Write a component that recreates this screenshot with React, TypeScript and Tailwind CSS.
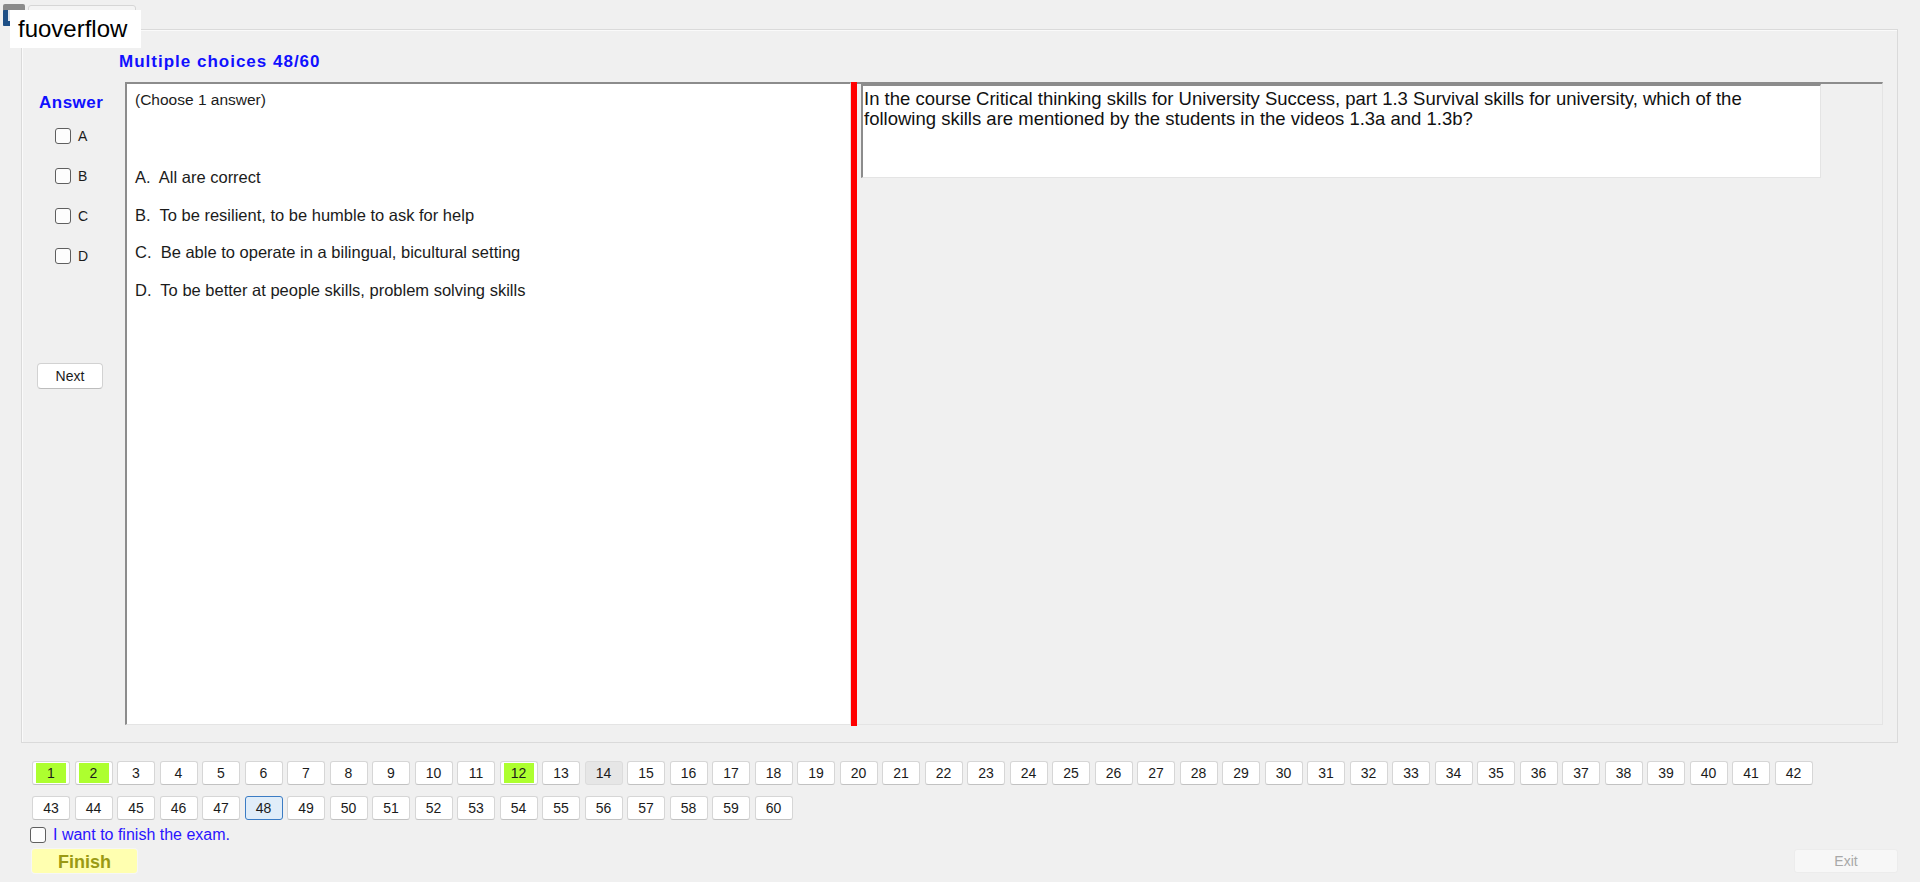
import React from 'react'

const answered = [1, 2, 12]
const visited = [14]
const current = 48

const options = [
  'A.  All are correct',
  'B.  To be resilient, to be humble to ask for help',
  'C.  Be able to operate in a bilingual, bicultural setting',
  'D.  To be better at people skills, problem solving skills',
]

function Box() {
  return <span className="block w-[16px] h-[16px] rounded-[3px] border border-[#5f5f5f] bg-[#fdfdfd]" />
}

function NumButton({ n }: { n: number }) {
  const isDone = answered.includes(n)
  const isSeen = visited.includes(n)
  const isCurrent = n === current
  return (
    <button
      className={
        'flex w-[38px] h-[24px] rounded-[3px] border text-[14px] text-[#1b1b1b] ' +
        (isCurrent
          ? 'border-[#3b7cc4] bg-[#e0edf9] p-0'
          : isSeen
            ? 'border-[#dcdcdc] bg-[#e6e6e6] p-0'
            : 'border-[#d6d6d6] border-b-[#c2c2c2] bg-white px-[3px] py-[1px]')
      }
    >
      <span className={'flex flex-1 items-center justify-center ' + (isDone ? 'bg-[#adff2f]' : '')}>{n}</span>
    </button>
  )
}

export default function App() {
  const row1 = Array.from({ length: 42 }, (_, i) => i + 1)
  const row2 = Array.from({ length: 18 }, (_, i) => i + 43)

  return (
    <div className="relative w-[1920px] h-[882px] overflow-hidden bg-[#f0f0f0] pt-[29px] font-['Liberation_Sans',Arial,sans-serif] text-[#1b1b1b]">
      {/* window icon and app tag */}
      <div className="absolute left-0 top-[3px]">
        <svg width="28" height="25" viewBox="0 0 28 25">
          <rect x="3" y="1" width="22" height="22" rx="2" fill="#8a8a8a" />
          <rect x="3" y="7" width="22" height="16" rx="1" fill="#1d4f86" />
          <rect x="8" y="7" width="14" height="11" fill="#dfe6ee" />
        </svg>
      </div>
      <div className="absolute left-[28px] top-[5px] w-[108px] h-[26px] rounded-t-[3px] border border-[#d6d6d6] bg-[#f4f4f4]" />
      <div className="absolute left-[10px] top-[10px] w-[131px] h-[38px] bg-white pl-[8px] text-[24px] leading-[38px] text-black">
        fuoverflow
      </div>

      <div className="ml-[21px] w-[1877px] h-[714px] border border-[#dadada] shadow-[inset_1px_1px_0_#fafafa] flex flex-col">
        <div className="pl-[97px] pt-[22px] h-[52px] text-[17px] leading-[20px] font-bold tracking-[1px] text-[#1010ff]">
          Multiple choices 48/60
        </div>

        <div className="flex h-[643px]">
          {/* answer picker */}
          <div className="w-[103px] flex flex-col">
            <div className="pl-[17px] pt-[12px] h-[46px] text-[17px] leading-[18px] font-bold tracking-[0.5px] text-[#1010ff]">
              Answer
            </div>
            <div className="flex flex-col gap-[24px] pl-[33px]">
              {['A', 'B', 'C', 'D'].map((l) => (
                <label key={l} className="flex items-center gap-[7px] h-[16px] text-[14px]">
                  <Box />
                  {l}
                </label>
              ))}
            </div>
            <button className="ml-[15px] mt-[99px] w-[66px] h-[26px] rounded-[4px] border border-[#d2d2d2] border-b-[#bdbdbd] bg-white text-[14px]">
              Next
            </button>
          </div>

          {/* options */}
          <div className="w-[726px] border-l-2 border-t-2 border-[#8c8c8c] border-r border-b border-r-[#e4e4e4] border-b-[#e4e4e4] bg-white pl-[8px] pt-[7px] leading-[18px] whitespace-pre">
            <div className="text-[15.5px]">(Choose 1 answer)</div>
            <div className="mt-[59px] flex flex-col gap-[19.5px] text-[16.5px]">
              {options.map((o) => (
                <div key={o}>{o}</div>
              ))}
            </div>
          </div>

          <div className="w-[6px] h-[644px] bg-[#ff0000]" />

          {/* question */}
          <div className="w-[1026px] border-t-2 border-[#8c8c8c] border-r border-b border-r-[#e4e4e4] border-b-[#e4e4e4] pl-[4px]">
            <div className="w-[960px] h-[94px] border-l-2 border-t-2 border-[#8c8c8c] border-r border-b border-r-[#e4e4e4] border-b-[#e4e4e4] bg-white pl-[1px] pt-[3px] text-[18.5px] leading-[19.5px] text-[#111]">
              In the course Critical thinking skills for University Success, part 1.3 Survival skills for university, which of the
              <br />
              following skills are mentioned by the students in the videos 1.3a and 1.3b?
            </div>
          </div>
        </div>
      </div>

      {/* question navigator */}
      <div className="ml-[32px] mt-[18px] flex flex-col gap-[11px]">
        <div className="flex gap-[4.5px]">
          {row1.map((n) => (
            <NumButton key={n} n={n} />
          ))}
        </div>
        <div className="flex gap-[4.5px]">
          {row2.map((n) => (
            <NumButton key={n} n={n} />
          ))}
        </div>
      </div>

      <label className="ml-[30px] mt-[7px] flex items-center gap-[7px] h-[16px] text-[16px] text-[#2a14ff]">
        <Box />I want to finish the exam.
      </label>

      <div className="mt-[6px] flex justify-between pl-[32px] pr-[22px]">
        <button className="w-[105px] h-[24px] rounded-[3px] bg-[#ffffb0] shadow-[0_0_0_1px_#f6f6f6] text-[18px] font-bold text-[#9a9a14]">
          Finish
        </button>
        <button className="w-[104px] h-[24px] rounded-[3px] border border-[#ececec] bg-[#f7f7f7] text-[14px] text-[#a8a8a8]">
          Exit
        </button>
      </div>
    </div>
  )
}
